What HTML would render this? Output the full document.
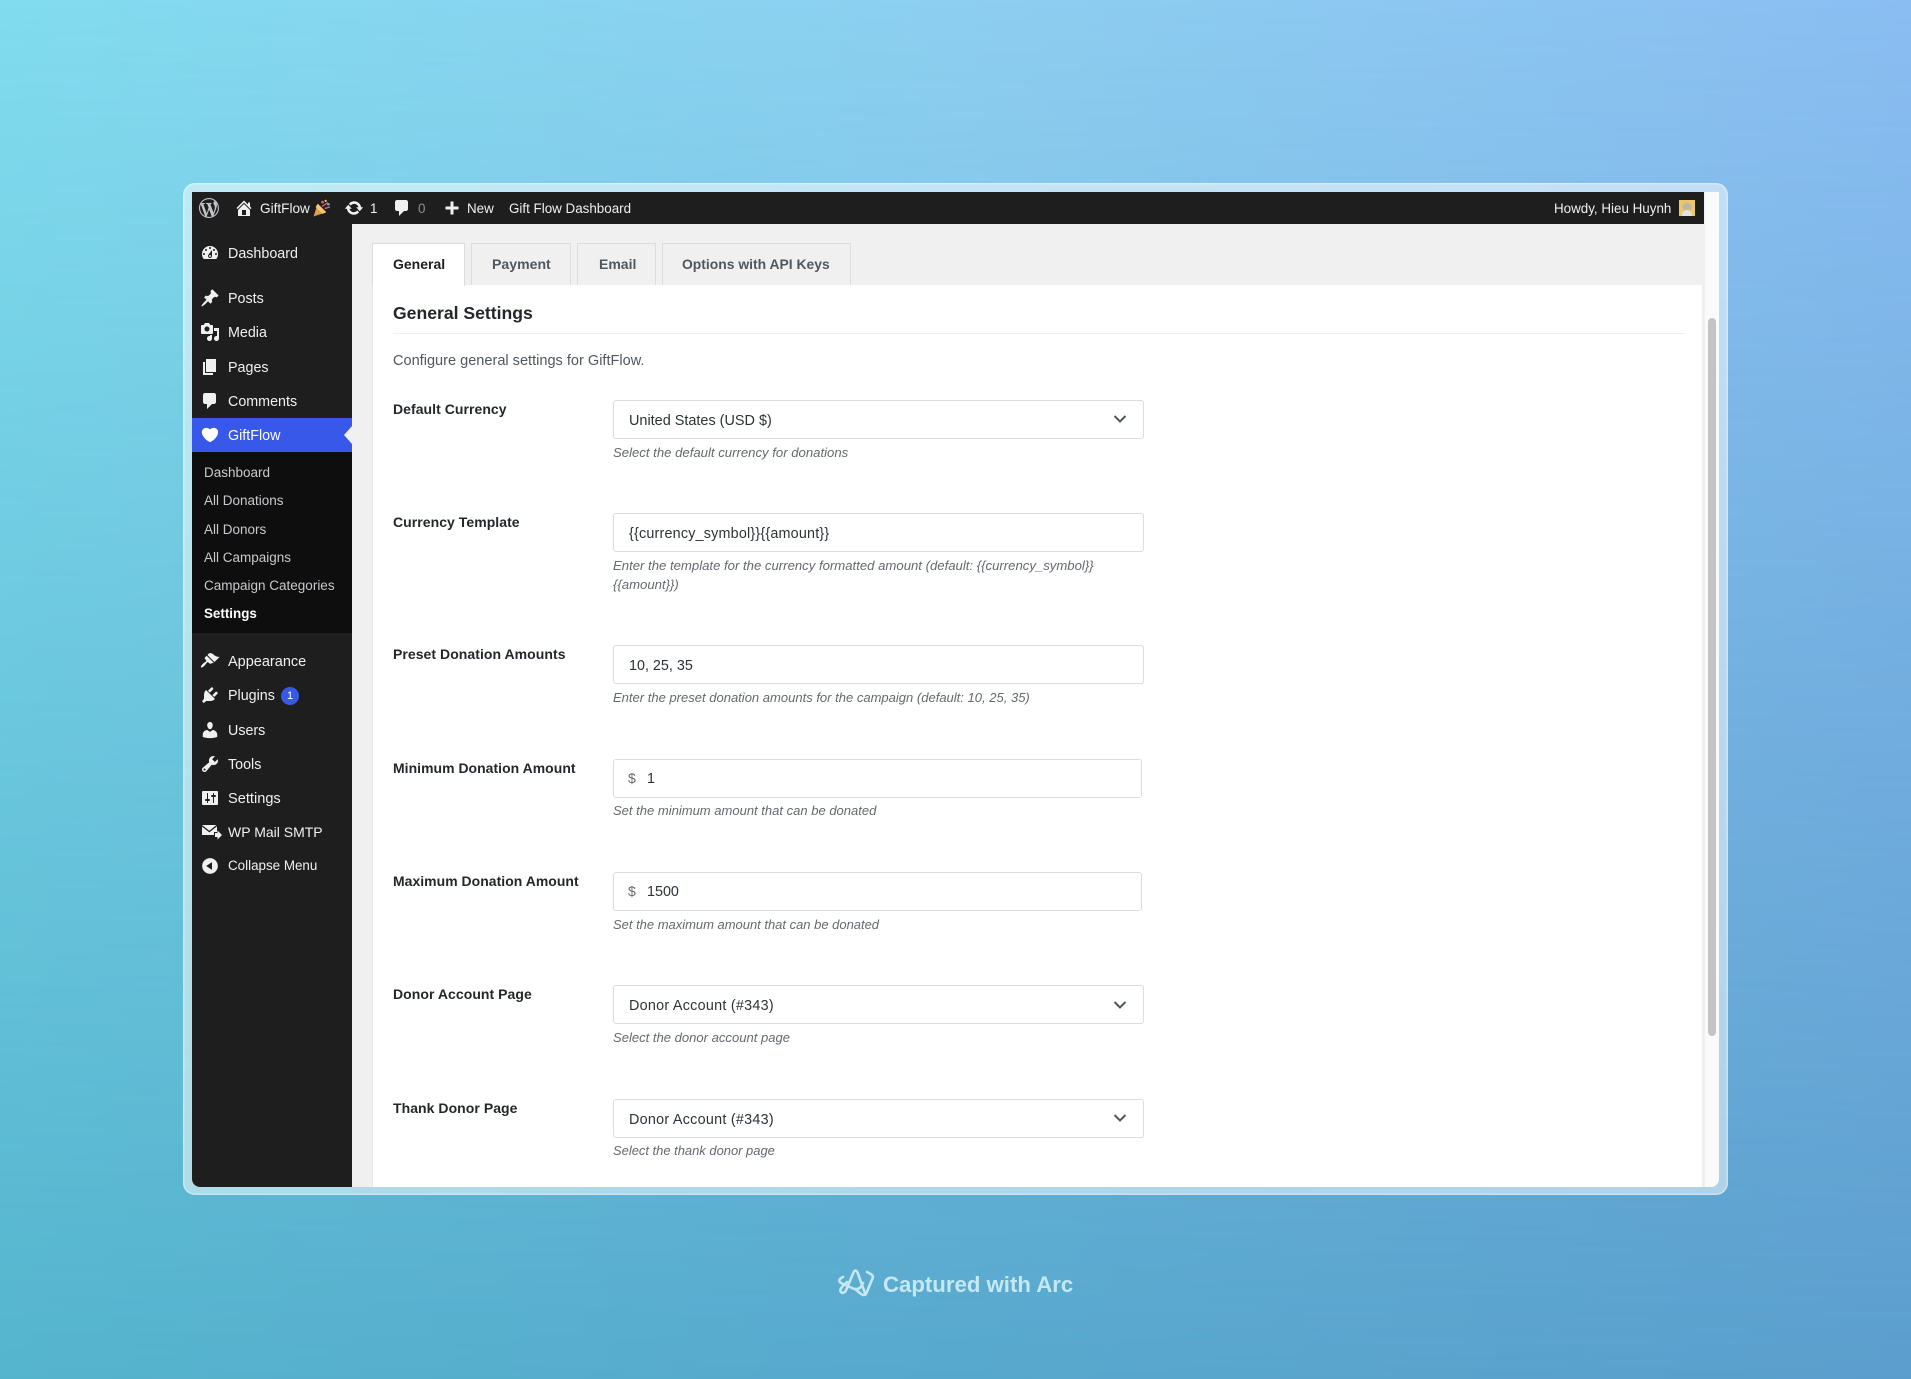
<!DOCTYPE html>
<html lang="en">
<head>
<meta charset="utf-8">
<title>GiftFlow Settings</title>
<style>
*{box-sizing:border-box}
html,body{margin:0;padding:0}
body{width:1911px;height:1379px;position:relative;overflow:hidden;font-family:"Liberation Sans",Arial,sans-serif;background:linear-gradient(90deg,#82dcef 0%,#8ecff0 50%,#8bbef2 100%)}
#bl{position:absolute;inset:0;background:linear-gradient(90deg,#55b4cd 0%,#57a8cd 50%,#5b9ecd 100%);-webkit-mask-image:linear-gradient(180deg,transparent 0%,#000 100%);mask-image:linear-gradient(180deg,transparent 0%,#000 100%)}
#frame{position:absolute;left:183px;top:183px;width:1545px;height:1012px;border-radius:12px;background:rgba(255,255,255,.5);box-shadow:inset 0 0 0 1.5px rgba(255,255,255,.35)}
#win{position:absolute;left:192px;top:192px;width:1527px;height:995px;border-radius:0 0 8px 8px;background:#f0f0f0;overflow:hidden}
.a{position:absolute}
#win .a,#win svg{position:absolute}
.t{position:absolute;white-space:nowrap;line-height:20px;height:20px}
.bar{left:0;top:0;width:1512px;height:32px;background:#1e1e1e}
.side{left:0;top:32px;width:160px;height:963px;background:#1e1e1e}
.sub{left:0;top:260px;width:160px;height:181px;background:#0e0e0e}
.cur{left:0;top:226px;width:160px;height:34px;background:#3858e9}
.sb{left:1512px;top:0;width:15px;height:995px;background:#fafafa;border-left:1px solid #f0f0f0}
.th{left:1516px;top:126px;width:8px;height:718px;background:#c4c4c4;border-radius:4px}
.card{left:180px;top:93px;width:1330px;height:902px;background:#fff;border-left:1px solid #e8e8e8}
.tab{top:51px;height:42px;background:#f0f0f0;border:1px solid #dcdcde;border-bottom:0}
.tab.on{background:#fff;border-color:#dcdcde}
.hr{left:201px;top:141px;width:1292px;height:1px;background:#f0f0f0}
.in{left:421px;width:531px;height:39px;background:#fff;border:1px solid #dcdcde;border-radius:3px}
.m{color:#f0f0f1;font-size:14.3px;margin-top:1px}
.ab{color:#f0f0f1;font-size:13.4px}
.s{color:#c8c9cc;font-size:13.5px}
.l{color:#23272b;font-size:14px;font-weight:bold;letter-spacing:.05px}
.v{color:#2c3338;font-size:14.35px}
.h{color:#646970;font-size:13.15px;font-style:italic}
.tb{color:#50575e;font-size:14px;font-weight:bold}
</style>
</head>
<body>
<div id="bl"></div>
<div id="frame"></div>
<div id="win">
  <div class="a sb"></div><div class="a th"></div>
  <div class="a bar"></div>
  <div class="a side"></div>
  <div class="a sub"></div>
  <div class="a cur"></div>
  <svg style="left:152px;top:234px" width="8" height="18" viewBox="0 0 8 18"><path d="M8 0v18L0 9z" fill="#f0f0f0"/></svg>

  <!-- admin bar -->
  <svg style="left:7px;top:6px" width="20" height="20" viewBox="0 0 20 20" fill="#c3c4c7"><path d="M20 10c0-5.51-4.49-10-10-10C4.48 0 0 4.49 0 10c0 5.52 4.48 10 10 10 5.51 0 10-4.48 10-10zM7.78 15.37L4.37 6.22c.55-.02 1.17-.08 1.17-.08.5-.06.44-1.13-.06-1.11 0 0-1.45.11-2.37.11-.18 0-.37 0-.58-.01C4.12 2.69 6.87 1.11 10 1.11c2.33 0 4.45.87 6.05 2.34-.68-.11-1.65.39-1.65 1.58 0 .74.45 1.36.9 2.1.35.61.55 1.36.55 2.46 0 1.49-1.4 5-1.4 5l-3.03-8.37c.54-.02.82-.17.82-.17.5-.05.44-1.25-.06-1.22 0 0-1.44.12-2.38.12-.87 0-2.33-.12-2.33-.12-.5-.03-.56 1.2-.06 1.22l.92.08 1.26 3.41zM17.41 10c.24-.64.74-1.87.43-4.25.7 1.29 1.05 2.71 1.05 4.25 0 3.29-1.73 6.24-4.4 7.78.97-2.59 1.94-5.2 2.92-7.78zM6.1 18.09C3.12 16.65 1.11 13.53 1.11 10c0-1.3.23-2.48.72-3.59C3.25 10.3 4.67 14.2 6.1 18.09zm4.03-6.63l2.58 6.98c-.86.29-1.76.45-2.71.45-.79 0-1.57-.11-2.29-.33.81-2.38 1.62-4.74 2.42-7.1z"/></svg>
  <svg style="left:42px;top:6px" width="20" height="20" viewBox="0 0 20 20" fill="#f0f0f1"><path d="M16 8.5l1.53 1.53-1.06 1.06L10 4.62l-6.47 6.47-1.06-1.06L10 2.5l4 4v-2h2v4zm-6-2.46l6 5.99V18H4v-5.97zM12 17v-5H8v5h4z"/></svg>
  <span class="t ab" style="left:68px;top:7px;font-size:13.6px">GiftFlow</span>
  <svg style="left:121px;top:7px" width="18" height="18" viewBox="0 0 17 17"><path d="M4.500 4.500l8 8L.5 16.500z" fill="#e0a045"/><path d="M4.500 4.500l8 8-3.500 1.500-6.500-6.500z" fill="#f3c979"/><circle cx="9" cy="3" r="1.300" fill="#e25c7a"/><circle cx="14.500" cy="5" r="1.300" fill="#5aa5e6"/><circle cx="12" cy="1.800" r="1.100" fill="#f0c040"/><path d="M8.500 7l5.500-3.500M11 9l5-1.500" stroke="#d9636e" stroke-width="1.300"/></svg>
  <svg style="left:152px;top:6px" width="20" height="20" viewBox="0 0 20 20" fill="#f0f0f1"><path d="M10.2 3.28c3.53 0 6.43 2.61 6.92 6h2.08l-3.5 4-3.5-4h2.32c-.45-1.97-2.21-3.45-4.32-3.45-1.45 0-2.73.71-3.54 1.78L4.95 5.66C6.23 4.2 8.11 3.28 10.2 3.28zm-.4 13.44c-3.52 0-6.43-2.61-6.92-6H.8l3.5-4c1.17 1.33 2.33 2.67 3.5 4H5.48c.45 1.97 2.21 3.45 4.32 3.45 1.45 0 2.73-.71 3.54-1.78l1.71 1.95c-1.28 1.46-3.15 2.38-5.25 2.38z"/></svg>
  <span class="t ab" style="left:178px;top:7px">1</span>
  <svg style="left:200px;top:6px" width="20" height="20" viewBox="0 0 20 20" fill="#f0f0f1"><path d="M5 2h9c1.1 0 2 .9 2 2v7c0 1.1-.9 2-2 2h-2l-5 5v-5H5c-1.1 0-2-.9-2-2V4c0-1.1.9-2 2-2z"/></svg>
  <span class="t ab" style="left:226px;top:7px;color:#8c8f94">0</span>
  <svg style="left:252px;top:8px" width="16" height="16" viewBox="0 0 16 16" fill="#f0f0f1"><path d="M6.500 1.500h3v5h5v3h-5v5h-3v-5h-5v-3h5z"/></svg>
  <span class="t ab" style="left:275px;top:7px">New</span>
  <span class="t ab" style="left:317px;top:7px">Gift Flow Dashboard</span>
  <span class="t ab" style="left:1362px;top:7px;font-size:13.4px">Howdy, Hieu Huynh</span>
  <svg style="left:1487px;top:8px" width="16" height="16" viewBox="0 0 16 16"><rect width="16" height="16" fill="#edc866"/><circle cx="8" cy="7" r="4.500" fill="#b9b7ae"/><path d="M3 16c0-4 2-6 5-6s5 2 5 6z" fill="#e4e2dc"/><circle cx="8" cy="8" r="1.600" fill="#e2b84e"/></svg>

  <!-- sidebar icons -->
  <svg style="left:8px;top:51px" width="20" height="20" viewBox="0 0 20 20" fill="#f0f0f1"><path fill-rule="evenodd" d="M3.76 16h12.48c1.1-1.37 1.76-3.11 1.76-5 0-4.42-3.58-8-8-8s-8 3.58-8 8c0 1.89.66 3.63 1.76 5zM10 4c.55 0 1 .45 1 1s-.45 1-1 1-1-.45-1-1 .45-1 1-1zM6 6c.55 0 1 .45 1 1s-.45 1-1 1-1-.45-1-1 .45-1 1-1zm8 0c.55 0 1 .45 1 1s-.45 1-1 1-1-.45-1-1 .45-1 1-1zm-5.37 5.55L12 7v6c0 1.1-.9 2-2 2s-2-.9-2-2c0-.57.24-1.08.63-1.45zM4 10c.55 0 1 .45 1 1s-.45 1-1 1-1-.45-1-1 .45-1 1-1zm12 0c.55 0 1 .45 1 1s-.45 1-1 1-1-.45-1-1 .45-1 1-1zm-5 3c0-.55-.45-1-1-1s-1 .45-1 1 .45 1 1 1 1-.45 1-1z"/></svg>
  <svg style="left:8px;top:96px" width="20" height="20" viewBox="0 0 20 20" fill="#f0f0f1"><path d="M10.44 3.02l1.82-1.82 6.36 6.35-1.83 1.82c-1.05-.68-2.48-.57-3.41.36l-.75.75c-.92.93-1.04 2.35-.35 3.41l-1.83 1.82-2.41-2.41-2.8 2.79c-.42.42-3.38 2.71-3.8 2.29s1.86-3.39 2.28-3.81l2.79-2.79L4.1 9.36l1.83-1.82c1.05.69 2.48.57 3.4-.36l.75-.75c.93-.92 1.05-2.35.36-3.41z"/></svg>
  <svg style="left:8px;top:130px" width="20" height="20" viewBox="0 0 20 20" fill="#f0f0f1"><path fill-rule="evenodd" d="M13 11V4c0-.55-.45-1-1-1h-1.67L9 1H5L3.67 3H2c-.55 0-1 .45-1 1v7c0 .55.45 1 1 1h10c.55 0 1-.45 1-1zM7 4.5c1.38 0 2.5 1.12 2.5 2.5S8.38 9.5 7 9.5 4.5 8.38 4.5 7 5.62 4.5 7 4.5zM14 6h5v10.5c0 1.38-1.12 2.5-2.5 2.5S14 17.88 14 16.5s1.12-2.5 2.5-2.5c.17 0 .34.02.5.05V9h-3V6zm-4 8.05V13h2v3.5c0 1.38-1.12 2.5-2.5 2.5S7 17.88 7 16.5 8.12 14 9.5 14c.17 0 .34.02.5.05z"/></svg>
  <svg style="left:8px;top:165px" width="20" height="20" viewBox="0 0 20 20" fill="#f0f0f1"><path d="M6 15V2h10v13H6zm-1 1h8v2H3V5h2v11z"/></svg>
  <svg style="left:8px;top:199px" width="20" height="20" viewBox="0 0 20 20" fill="#f0f0f1"><path d="M5 2h9c1.1 0 2 .9 2 2v7c0 1.1-.9 2-2 2h-2l-5 5v-5H5c-1.1 0-2-.9-2-2V4c0-1.1.9-2 2-2z"/></svg>
  <svg style="left:8px;top:233px" width="20" height="20" viewBox="0 0 20 20" fill="#fff"><path d="M10 17.12c3.33-1.4 5.74-3.79 7.04-6.21 1.28-2.41 1.46-4.81.32-6.25-1.03-1.29-2.37-1.78-3.73-1.74s-2.68.63-3.63 1.46c-.95-.83-2.27-1.42-3.63-1.46s-2.7.45-3.73 1.74c-1.14 1.44-.96 3.84.34 6.25 1.28 2.42 3.69 4.81 7.02 6.21z"/></svg>
  <svg style="left:8px;top:459px" width="20" height="20" viewBox="0 0 20 20" fill="#f0f0f1"><path d="M14.48 11.06L7.41 3.99l1.5-1.5c.5-.56 2.3-.47 3.51.32 1.21.8 1.43 1.28 2.91 2.1 1.18.64 2.45 1.26 4.45.85zm-.71.71L6.7 4.7 4.93 6.47c-.39.39-.39 1.02 0 1.41l1.06 1.06c.39.39.39 1.03 0 1.42-.6.6-1.43 1.11-2.21 1.69-.35.26-.7.53-1.01.84-1.43 1.43-2.2 2.9-1.66 3.44s2.01-.23 3.44-1.66c.31-.31.58-.66.84-1.01.58-.78 1.09-1.61 1.69-2.21.39-.39 1.03-.39 1.42 0l1.06 1.06c.39.39 1.02.39 1.41 0z"/></svg>
  <svg style="left:8px;top:493px" width="20" height="20" viewBox="0 0 20 20" fill="#f0f0f1"><path d="M13.11 4.36L9.87 7.6 8 5.73l3.24-3.24c.35-.34 1.05-.2 1.56.32.52.51.66 1.21.31 1.55zm-8 1.77l.91-1.12 9.01 9.01-1.19.84c-.71.71-2.63 1.16-3.82 1.16H6.14L4.9 17.26c-.59.59-1.54.59-2.12 0-.59-.58-.59-1.53 0-2.12l1.24-1.24v-3.88c0-1.13.4-3.19 1.09-3.89zm7.26 3.97l3.24-3.24c.34-.35 1.04-.21 1.55.31.52.51.66 1.21.31 1.55l-3.24 3.25z"/></svg>
  <svg style="left:8px;top:528px" width="20" height="20" viewBox="0 0 20 20" fill="#f0f0f1"><path d="M10 9.25c-2.27 0-2.73-3.44-2.73-3.44C7 4.02 7.82 2 9.97 2c2.16 0 2.98 2.02 2.71 3.81 0 0-.41 3.44-2.68 3.44zm0 2.57L12.72 10c2.39 0 4.52 2.33 4.52 4.53v2.49s-3.65 1.13-7.24 1.13c-3.65 0-7.24-1.13-7.24-1.13v-2.49c0-2.25 1.94-4.48 4.47-4.48z"/></svg>
  <svg style="left:8px;top:562px" width="20" height="20" viewBox="0 0 20 20" fill="#f0f0f1"><path d="M16.68 9.77c-1.34 1.34-3.3 1.67-4.95.99l-5.41 6.52c-.99.99-2.59.99-3.58 0s-.99-2.59 0-3.57l6.52-5.42c-.68-1.65-.35-3.61.99-4.95 1.28-1.28 3.12-1.62 4.72-1.06l-2.89 2.89 2.82 2.82 2.86-2.87c.53 1.58.18 3.39-1.08 4.67zM3.81 16.21c.4.39 1.04.39 1.43 0 .4-.4.4-1.04 0-1.43-.39-.4-1.03-.4-1.43 0-.39.39-.39 1.03 0 1.43z"/></svg>
  <svg style="left:8px;top:596px" width="20" height="20" viewBox="0 0 20 20" fill="#f0f0f1"><path fill-rule="evenodd" d="M18 16V4c0-.55-.45-1-1-1H3c-.55 0-1 .45-1 1v12c0 .55.45 1 1 1h14c.55 0 1-.45 1-1zM8 11h1c.55 0 1 .45 1 1s-.45 1-1 1H8v1.5c0 .28-.22.5-.5.5s-.5-.22-.5-.5V13H6c-.55 0-1-.45-1-1s.45-1 1-1h1V5.5c0-.28.22-.5.5-.5s.5.22.5.5V11zm5-2h-1c-.55 0-1-.45-1-1s.45-1 1-1h1V5.5c0-.28.22-.5.5-.5s.5.22.5.5V7h1c.55 0 1 .45 1 1s-.45 1-1 1h-1v5.5c0 .28-.22.5-.5.5s-.5-.22-.5-.5V9z"/></svg>
  <svg style="left:9px;top:630px" width="22" height="20" viewBox="0 0 22 20" fill="#f0f0f1"><path d="M1 3h14.500L8.300 8.800zM1 4.600l7.300 5.800 7.700-6V10h-3v3H1zM14 11h2.500V8.500L21 13l-4.500 4.500V15H14z"/></svg>
  <svg style="left:8px;top:664px" width="20" height="20" viewBox="0 0 20 20" fill="#f0f0f1"><path fill-rule="evenodd" d="M10 2.16c4.33 0 7.84 3.51 7.84 7.84s-3.51 7.84-7.84 7.84S2.16 14.33 2.16 10 5.71 2.16 10 2.16zm2 11.72V6.12L6.18 9.97z"/></svg>

  <!-- sidebar text -->
  <span class="t m" style="left:36px;top:51px">Dashboard</span>
  <span class="t m" style="left:36px;top:96px">Posts</span>
  <span class="t m" style="left:36px;top:130px">Media</span>
  <span class="t m" style="left:36px;top:165px">Pages</span>
  <span class="t m" style="left:36px;top:199px">Comments</span>
  <span class="t m" style="left:36px;top:233px;color:#fff">GiftFlow</span>
  <span class="t s" style="left:12px;top:271px">Dashboard</span>
  <span class="t s" style="left:12px;top:299px">All Donations</span>
  <span class="t s" style="left:12px;top:328px">All Donors</span>
  <span class="t s" style="left:12px;top:356px">All Campaigns</span>
  <span class="t s" style="left:12px;top:384px">Campaign Categories</span>
  <span class="t s" style="left:12px;top:412px;color:#fff;font-weight:bold;font-size:13.4px">Settings</span>
  <span class="t m" style="left:36px;top:459px;font-size:14.5px">Appearance</span>
  <span class="t m" style="left:36px;top:493px">Plugins</span>
  <div class="a" style="left:89px;top:495px;width:18px;height:18px;border-radius:50%;background:#3858e9;color:#fff;font-size:11px;line-height:18px;text-align:center">1</div>
  <span class="t m" style="left:36px;top:528px">Users</span>
  <span class="t m" style="left:36px;top:562px">Tools</span>
  <span class="t m" style="left:36px;top:596px;font-size:14.6px">Settings</span>
  <span class="t m" style="left:36px;top:630px;font-size:14px;margin-top:0">WP Mail SMTP</span>
  <span class="t m" style="left:36px;top:664px;font-size:13.4px;margin-top:0">Collapse Menu</span>

  <!-- card and tabs -->
  <div class="a card"></div>
  <div class="a tab on" style="left:180px;width:93px;height:43px"></div>
  <div class="a tab" style="left:279px;width:100px"></div>
  <div class="a tab" style="left:385px;width:79px"></div>
  <div class="a tab" style="left:470px;width:189px"></div>
  <span class="t tb" style="left:201px;top:62px;color:#1e1e1e">General</span>
  <span class="t tb" style="left:300px;top:62px;font-size:14.1px">Payment</span>
  <span class="t tb" style="left:407px;top:62px">Email</span>
  <span class="t tb" style="left:490px;top:62px;font-size:13.9px">Options with API Keys</span>

  <span class="t" style="left:201px;top:111px;font-size:17.6px;font-weight:bold;color:#23272b">General Settings</span>
  <div class="a hr"></div>
  <span class="t" style="left:201px;top:159px;font-size:14.55px;color:#50575e">Configure general settings for GiftFlow.</span>

  <!-- fields -->
  <span class="t l" style="left:201px;top:207px">Default Currency</span>
  <div class="a in" style="top:208px"></div>
  <span class="t v" style="left:437px;top:219px;font-size:14.45px">United States (USD $)</span>
  <svg style="left:921px;top:222px" width="14" height="10" viewBox="0 0 14 10"><path d="M1.500 2l5.500 5.500L12.500 2" fill="none" stroke="#50575e" stroke-width="2"/></svg>
  <span class="t h" style="left:421px;top:251px">Select the default currency for donations</span>

  <span class="t l" style="left:201px;top:320px">Currency Template</span>
  <div class="a in" style="top:321px"></div>
  <span class="t v" style="left:437px;top:332px;letter-spacing:.2px">{{currency_symbol}}{{amount}}</span>
  <span class="t h" style="left:421px;top:364px">Enter the template for the currency formatted amount (default: {{currency_symbol}}</span>
  <span class="t h" style="left:421px;top:383px">{{amount}})</span>

  <span class="t l" style="left:201px;top:452px">Preset Donation Amounts</span>
  <div class="a in" style="top:453px"></div>
  <span class="t v" style="left:437px;top:464px">10, 25, 35</span>
  <span class="t h" style="left:421px;top:496px;font-size:13.03px">Enter the preset donation amounts for the campaign (default: 10, 25, 35)</span>

  <span class="t l" style="left:201px;top:566px;font-size:13.95px">Minimum Donation Amount</span>
  <div class="a in" style="top:567px;width:529px"></div>
  <span class="t" style="left:436px;top:576px;font-size:14px;color:#646970">$</span>
  <span class="t v" style="left:455px;top:577px">1</span>
  <span class="t h" style="left:421px;top:609px;font-size:13.03px">Set the minimum amount that can be donated</span>

  <span class="t l" style="left:201px;top:679px;font-size:13.95px">Maximum Donation Amount</span>
  <div class="a in" style="top:680px;width:529px"></div>
  <span class="t" style="left:436px;top:689px;font-size:14px;color:#646970">$</span>
  <span class="t v" style="left:455px;top:690px">1500</span>
  <span class="t h" style="left:421px;top:723px;font-size:12.97px">Set the maximum amount that can be donated</span>

  <span class="t l" style="left:201px;top:792px">Donor Account Page</span>
  <div class="a in" style="top:793px"></div>
  <span class="t v" style="left:437px;top:804px;letter-spacing:.27px">Donor Account (#343)</span>
  <svg style="left:921px;top:808px" width="14" height="10" viewBox="0 0 14 10"><path d="M1.500 2l5.500 5.500L12.500 2" fill="none" stroke="#50575e" stroke-width="2"/></svg>
  <span class="t h" style="left:421px;top:836px;font-size:13.06px">Select the donor account page</span>

  <span class="t l" style="left:201px;top:906px">Thank Donor Page</span>
  <div class="a in" style="top:907px"></div>
  <span class="t v" style="left:437px;top:918px;letter-spacing:.27px">Donor Account (#343)</span>
  <svg style="left:921px;top:921px" width="14" height="10" viewBox="0 0 14 10"><path d="M1.500 2l5.500 5.500L12.500 2" fill="none" stroke="#50575e" stroke-width="2"/></svg>
  <span class="t h" style="left:421px;top:949px;font-size:12.95px">Select the thank donor page</span>
</div>

<!-- footer -->
<svg class="a" style="left:830px;top:1260px" width="60" height="45" viewBox="0 0 60 45" fill="none" stroke="#c5e8f2" stroke-width="2.600" stroke-linejoin="round" stroke-linecap="round"><path d="M35.500 34.500L27.500 12.500Q25.500 8.500 23.500 12.500L17 28Q15 34 11.500 32.500Q9 30.500 12 27L17 22"/><path d="M13 17L10.500 18.500Q8 21 11 23L22 28Q28 31 31.500 26L33 23"/><path d="M37 12L41.500 14.500Q44 16.500 42 19.500L36.500 33Q34.500 36.500 31 34L25 29"/></svg>
<span class="t" style="left:883px;top:1273px;height:24px;line-height:24px;font-size:22.2px;font-weight:bold;color:#c5e8f2">Captured with Arc</span>
</body>
</html>
